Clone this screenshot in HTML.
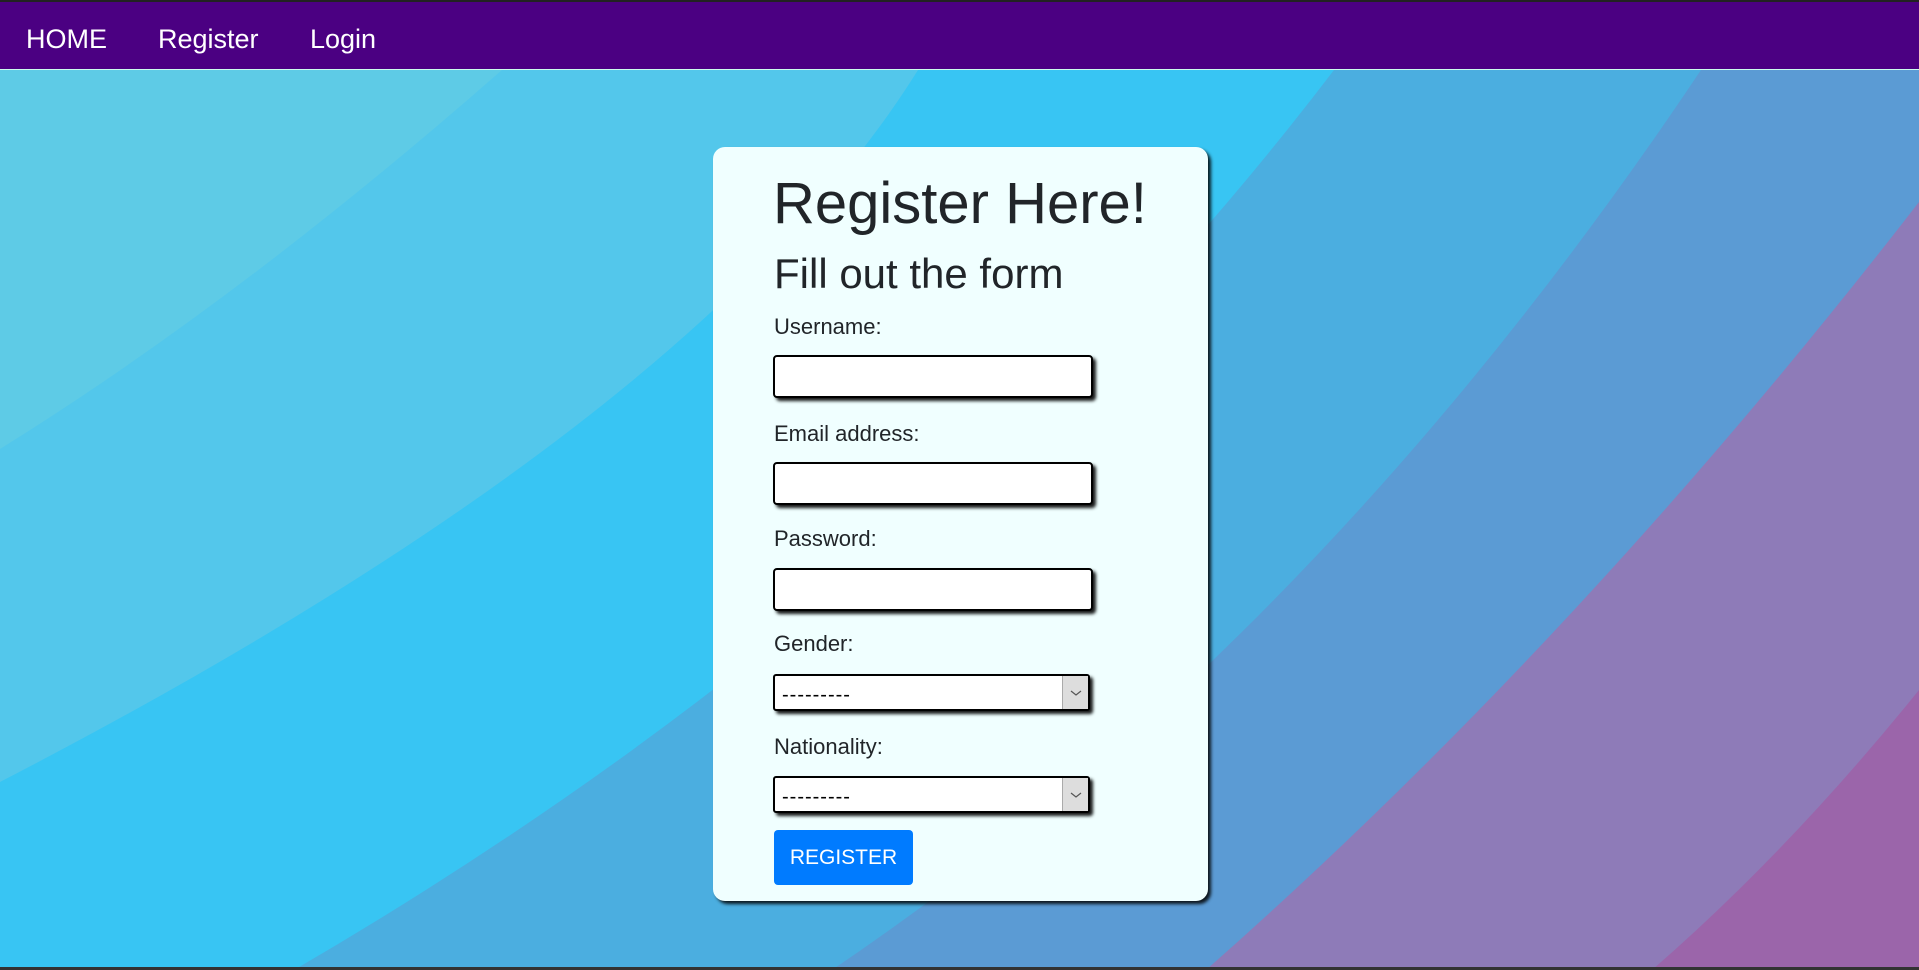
<!DOCTYPE html>
<html><head><meta charset="utf-8"><style>
*{margin:0;padding:0;box-sizing:border-box}
body{width:1919px;height:970px;overflow:hidden;position:relative;font-family:"Liberation Sans",sans-serif;background:#38c5f3}
#bg{position:absolute;left:0;top:0}
nav{position:absolute;left:0;top:0;width:1919px;height:70px;background:#4b0082;border-top:2px solid #222;border-bottom:1px solid #cfe;}
nav span{position:absolute;color:#fff;font-size:27px;line-height:27px;top:24px}
.card{position:absolute;left:713px;top:147px;width:495px;height:754px;background:#f0ffff;border-radius:12px;box-shadow:3px 3px 3px rgba(0,0,0,.85)}
.t{position:absolute;color:#212529;white-space:nowrap}
.inp{position:absolute;left:773px;width:320px;height:43px;background:#fff;border:2px solid #000;border-radius:4px;box-shadow:3px 3px 3px rgba(0,0,0,.9)}
.sel{position:absolute;left:773px;width:317px;height:37px;background:#fff;border:2px solid #000;border-radius:3px;box-shadow:3px 3px 3px rgba(0,0,0,.9)}
.sel .v{position:absolute;left:7px;top:9px;font-size:20px;line-height:20px;color:#000;letter-spacing:1px}
.sel .a{position:absolute;right:0;top:0;width:26px;height:33px;background:#ddd;border-left:1px solid #aaa}
.btn{position:absolute;left:774px;top:830px;width:139px;height:55px;background:#007bff;border-radius:4px;color:#fff;font-size:21px;line-height:55px;text-align:center}
</style></head><body>
<svg id="bg" width="1919" height="970" viewBox="0 0 1919 970">
<rect width="1919" height="970" fill="#5ecbe6"/>
<path d="M502 70 Q240 300 0 449 L0 970 L1919 970 L1919 70Z" fill="#53c7eb"/>
<path d="M918 70 Q700 420 0 782 L0 970 L1919 970 L1919 70Z" fill="#38c5f3"/>
<path d="M1334 70 Q930 600 294 970 L1919 970 L1919 70Z" fill="#4baee0"/>
<path d="M1701 70 Q1320 640 832 970 L1919 970 L1919 70Z" fill="#5b9bd4"/>
<path d="M1919 202 Q1580 640 1206 970 L1919 970Z" fill="#8e7bb8"/>
<path d="M1919 690 Q1790 850 1652 970 L1919 970Z" fill="#9b65aa"/>
<rect y="967" width="1919" height="3" fill="#333"/>
</svg>
<nav><span style="left:26px">HOME</span><span style="left:158px">Register</span><span style="left:310px">Login</span></nav>
<div class="card"></div>
<div class="t" style="left:773px;top:175px;font-size:58px;line-height:58px">Register Here!</div>
<div class="t" style="left:774px;top:253px;font-size:42px;line-height:42px">Fill out the form</div>
<div class="t" style="left:774px;top:316px;font-size:22px;line-height:22px">Username:</div>
<div class="inp" style="top:355px"></div>
<div class="t" style="left:774px;top:423px;font-size:22px;line-height:22px">Email address:</div>
<div class="inp" style="top:462px"></div>
<div class="t" style="left:774px;top:528px;font-size:22px;line-height:22px">Password:</div>
<div class="inp" style="top:568px"></div>
<div class="t" style="left:774px;top:633px;font-size:22px;line-height:22px">Gender:</div>
<div class="sel" style="top:674px"><span class="v">---------</span><span class="a"><svg width="26" height="33"><path d="M8 15 L13 19 L18 15" fill="none" stroke="#555" stroke-width="1.2"/></svg></span></div>
<div class="t" style="left:774px;top:736px;font-size:22px;line-height:22px">Nationality:</div>
<div class="sel" style="top:776px"><span class="v">---------</span><span class="a"><svg width="26" height="33"><path d="M8 15 L13 19 L18 15" fill="none" stroke="#555" stroke-width="1.2"/></svg></span></div>
<div class="btn">REGISTER</div>
</body></html>
